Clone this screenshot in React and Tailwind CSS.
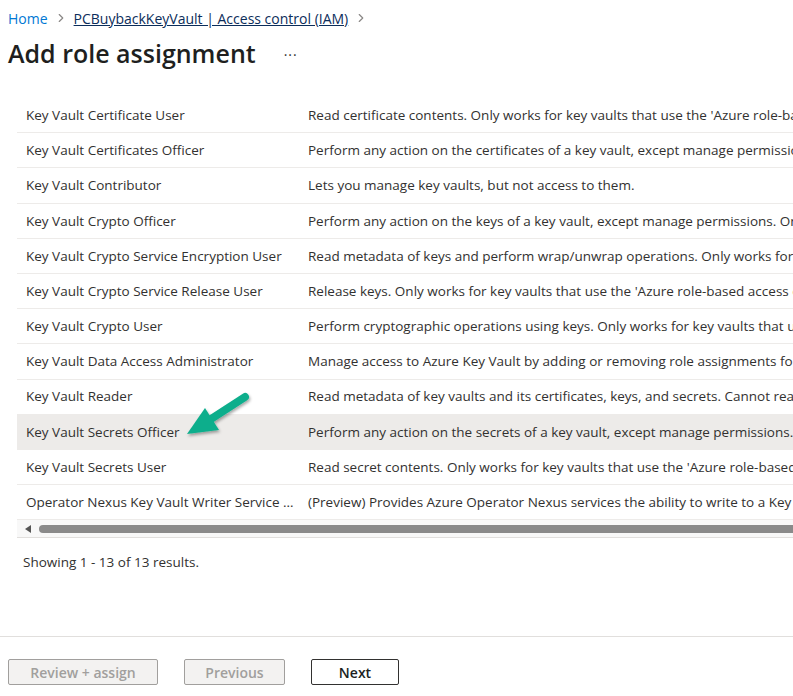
import { LuChevronRight } from "react-icons/lu";

const roles = [
    ["Key Vault Certificate User", "Read certificate contents. Only works for key vaults that use the 'Azure role-based access control' permission model."],
    ["Key Vault Certificates Officer", "Perform any action on the certificates of a key vault, except manage permissions. Only works for key vaults that use the 'Azure role-based access control' permission model."],
    ["Key Vault Contributor", "Lets you manage key vaults, but not access to them."],
    ["Key Vault Crypto Officer", "Perform any action on the keys of a key vault, except manage permissions. Only works for key vaults that use the 'Azure role-based access control' permission model."],
    ["Key Vault Crypto Service Encryption User", "Read metadata of keys and perform wrap/unwrap operations. Only works for key vaults that use the 'Azure role-based access control' permission model."],
    ["Key Vault Crypto Service Release User", "Release keys. Only works for key vaults that use the 'Azure role-based access control' permission model."],
    ["Key Vault Crypto User", "Perform cryptographic operations using keys. Only works for key vaults that use the 'Azure role-based access control' permission model."],
    ["Key Vault Data Access Administrator", "Manage access to Azure Key Vault by adding or removing role assignments for the Key Vault Administrator, Key Vault Certificates Officer roles."],
    ["Key Vault Reader", "Read metadata of key vaults and its certificates, keys, and secrets. Cannot read sensitive values such as secret contents or key material."],
    ["Key Vault Secrets Officer", "Perform any action on the secrets of a key vault, except manage permissions. Only works for key vaults that use the 'Azure role-based access control' permission model."],
    ["Key Vault Secrets User", "Read secret contents. Only works for key vaults that use the 'Azure role-based access control' permission model."],
    ["Operator Nexus Key Vault Writer Service Role (Preview)", "(Preview) Provides Azure Operator Nexus services the ability to write to a Key Vault."],
];

const font = { fontFamily: "'Open Sans', 'Noto Sans', sans-serif" };

export default function App() {
    return (
        <div className="w-[793px] h-[696px] bg-white text-[#323130] overflow-hidden flex flex-col" style={font}>
            <div className="flex items-center gap-1.5 px-2 pt-[8px] h-[28px] text-[14px]">
                <span className="text-[#0078d4]">Home</span>
                <LuChevronRight size={14} className="text-[#8a8886]" />
                <span className="text-[#0b2d5a] underline">PCBuybackKeyVault | Access control (IAM)</span>
                <LuChevronRight size={14} className="text-[#8a8886]" />
            </div>
            <div className="flex items-center px-2 mt-[6px] h-[40px]">
                <h1 className="text-[25px] font-semibold text-[#201f1e]">Add role assignment</h1>
                <span className="ml-[28px] text-[14px] tracking-[1px] text-[#323130]">···</span>
            </div>

            <div className="relative ml-[17px] mt-[24px] overflow-hidden text-[13.5px]">
                {roles.map(([name, desc], i) => (
                    <div
                        key={name}
                        className={`flex items-center h-[35.2px] border-b border-[#edebe9] ${i === 9 ? "bg-[#edebe9]" : ""}`}
                    >
                        <div className="w-[291px] shrink-0 pl-[9px] pr-[12px] truncate">{name}</div>
                        <div className="whitespace-nowrap">{desc}</div>
                    </div>
                ))}
                <div className="flex items-center h-[18px] bg-[#f8f8f8] border-b border-[#e1dfdd]">
                    <svg width="22" height="10" viewBox="0 0 22 10" className="shrink-0">
                        <path d="M8 5 L14 1 L14 9 Z" fill="#555" />
                    </svg>
                    <div className="flex-1 h-[8px] bg-[#8a8a8a] rounded-l-full" />
                </div>

                <svg className="absolute left-[160px] top-[292px]" width="80" height="60" viewBox="0 0 80 60">
                    <defs>
                        <filter id="sh" x="-20%" y="-20%" width="140%" height="140%">
                            <feDropShadow dx="1" dy="2" stdDeviation="1.5" floodColor="#000" floodOpacity="0.35" />
                        </filter>
                    </defs>
                    <g filter="url(#sh)">
                        <line x1="68" y1="7" x2="34" y2="29" stroke="#0fae8c" strokeWidth="8" strokeLinecap="round" />
                        <path d="M10 44 L28 18 L42 40 Z" fill="#0fae8c" />
                    </g>
                </svg>
            </div>

            <div className="px-[23px] pt-[14px] text-[13.5px]">Showing 1 - 13 of 13 results.</div>

            <div className="mt-auto border-t border-[#e1dfdd] h-[60px] flex items-start pt-[22px] px-2 gap-[26px] text-[14px] font-semibold">
                <button className="w-[150px] h-[26px] rounded-[2px] border border-[#a19f9d] bg-[#f3f2f1] text-[#a19f9d]">Review + assign</button>
                <button className="w-[101px] h-[26px] rounded-[2px] border border-[#a19f9d] bg-[#f3f2f1] text-[#a19f9d]">Previous</button>
                <button className="w-[88px] h-[26px] rounded-[2px] border border-[#323130] bg-white text-[#201f1e]">Next</button>
            </div>
        </div>
    );
}
